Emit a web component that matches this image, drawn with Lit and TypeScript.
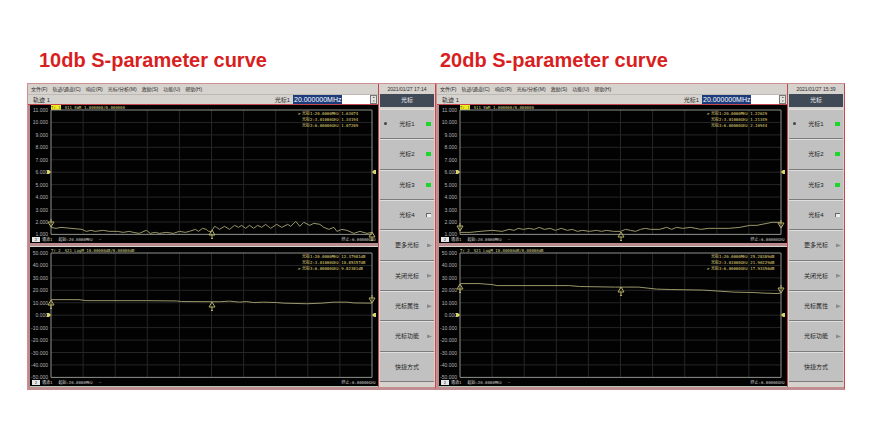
import { LitElement, html, svg, css } from "lit";
import { customElement, property } from "lit/decorators.js";
import { classMap } from "lit/directives/class-map.js";

interface Marker {
  n: number;
  x: number;
  y: number;
  down?: boolean;
}

interface Trace {
  title: string;
  rest: string;
  active: boolean;
  ticks: string[];
  readouts: string[];
  current: number;
  points: string;
  markers: Marker[];
}

interface Screen {
  heading: string;
  date: string;
  traces: Trace[];
}

const range = (from: number, step: number) =>
  Array.from({ length: 11 }, (_, i) => (from - i * step).toFixed(3));

const SWR_TICKS = range(11, 1);
const LOG_TICKS = range(50, 10);

const SCREENS: Screen[] = [
  {
    heading: "10db S-parameter curve",
    date: "2021/01/27 17:14",
    traces: [
      {
        title: "Tr 1",
        rest: "S11 SWR 1.000000/0.000000",
        active: true,
        ticks: SWR_TICKS,
        readouts: ["光标1:20.0000MHz 1.63074", "光标2:3.01000GHz 1.34194", "光标3:6.00000GHz 1.07209"],
        current: 0,
        points:
          "0,117 5,118 10,117 20,118 31,119 35,121 40,120 44,121 52,120 58,121 66,121 72,122 78,121 82,122 88,123 95,120 99,123 104,122 108,123 115,122 122,123 128,121 134,122 138,121 144,119 147,121 151,118 155,119 157,121 160,121 163,116 165,117 168,119 173,116 178,119 183,115 187,117 190,115 194,118 198,115 202,118 206,115 210,117 214,114 219,118 225,114 230,117 236,114 239,116 244,111 248,116 252,112 258,115 262,113 268,114 272,117 277,119 282,117 285,121 290,119 295,120 302,123 308,121 315,123 320,122",
        markers: [
          { n: 1, x: 0, y: 117, down: true },
          { n: 2, x: 160, y: 120 },
          { n: 3, x: 320, y: 122 },
        ],
      },
      {
        title: "Tr 2",
        rest: "S21 LogM 10.00000dB/0.00000dB",
        active: false,
        ticks: LOG_TICKS,
        readouts: ["光标1:20.0000MHz 12.37981dB", "光标2:3.01000GHz 10.85357dB", "光标3:6.00000GHz 9.82381dB"],
        current: 2,
        points:
          "0,46.5 28,46.5 35,47.5 95,47.5 125,47.8 130,48.4 168,48.6 178,48 188,49 195,48.4 202,49.4 212,49 225,49.4 232,50 255,50.6 270,50 282,49 295,49 302,49.8 320,50",
        markers: [
          { n: 1, x: 0, y: 47 },
          { n: 2, x: 160, y: 49 },
          { n: 3, x: 320, y: 50, down: true },
        ],
      },
    ],
  },
  {
    heading: "20db S-parameter curve",
    date: "2021/01/27 15:39",
    traces: [
      {
        title: "Tr 1",
        rest: "S11 SWR 1.000000/0.000000",
        active: true,
        ticks: SWR_TICKS,
        readouts: ["光标1:20.0000MHz 1.22629", "光标2:3.01000GHz 1.21349", "光标3:6.00000GHz 2.10944"],
        current: 0,
        points:
          "0,122 10,122 20,121 32,120 42,121 49,119 54,120 58,118 63,119 69,118 74,119 79,117 84,119 90,118 95,120 101,118 107,120 112,119 117,121 122,120 129,121 136,120 141,121 146,120 153,121 160,121 165,119 170,120 175,121 180,119 185,118 190,119 199,119 206,117 211,119 216,117 222,118 230,117 240,119 248,118 256,118 268,118 279,117 289,115 296,115 306,113 311,112 316,112 320,112",
        markers: [
          { n: 1, x: 0, y: 121, down: true },
          { n: 2, x: 160, y: 122 },
          { n: 3, x: 320, y: 118, down: true },
        ],
      },
      {
        title: "Tr 2",
        rest: "S21 LogM 10.00000dB/0.00000dB",
        active: false,
        ticks: LOG_TICKS,
        readouts: ["光标1:20.0000MHz 25.28389dB", "光标2:3.01000GHz 21.90229dB", "光标3:6.00000GHz 17.93350dB"],
        current: 2,
        points:
          "0,30.5 19,30.5 32,31.5 37,32.5 109,32.5 119,33.4 155,34 165,34 178,34 196,36 210,36.4 243,37 273,39 293,39.4 303,40 316,40.4 320,40",
        markers: [
          { n: 1, x: 0, y: 31 },
          { n: 2, x: 160, y: 34 },
          { n: 3, x: 320, y: 40, down: true },
        ],
      },
    ],
  },
];

const MENU = ["文件(F)", "轨迹/通道(C)", "响应(R)", "光标/分析(M)", "激励(S)", "功能(U)", "帮助(H)"];

const KEYS: { label: string; kind: "on" | "off" | "more" | "plain"; current?: boolean }[] = [
  { label: "光标1", kind: "on", current: true },
  { label: "光标2", kind: "on" },
  { label: "光标3", kind: "on" },
  { label: "光标4", kind: "off" },
  { label: "更多光标", kind: "more" },
  { label: "关闭光标", kind: "more" },
  { label: "光标属性", kind: "more" },
  { label: "光标功能", kind: "more" },
  { label: "快捷方式", kind: "plain" },
];

@customElement("trace-plot")
export class TracePlot extends LitElement {
  @property({ attribute: false }) trace!: Trace;

  static styles = css`
    :host {
      display: block;
      background: #020202;
      color: #d0d0d0;
      font: 4px/6px "DejaVu Sans Mono", "Noto Sans CJK SC", monospace;
      white-space: nowrap;
    }
    .title {
      display: flex;
      height: 5px;
      padding-left: 21px;
      gap: 4px;
      line-height: 5px;
      color: #dcd68a;
    }
    .active .tag {
      background: #f3ee1f;
      color: #6b6710;
    }
    .body {
      display: grid;
      grid-template-columns: 21px 1fr 6px;
      height: 124px;
    }
    .ticks {
      display: flex;
      flex-direction: column;
      justify-content: space-between;
      padding-right: 3px;
      text-align: right;
      font-family: "Liberation Sans", sans-serif;
      font-size: 5px;
      color: #b5b5b5;
    }
    .ticks span {
      height: 0;
      line-height: 0;
    }
    .chart {
      position: relative;
    }
    .grid {
      display: block;
      width: 100%;
      height: 100%;
      overflow: visible;
    }
    .grid * {
      fill: none;
      vector-effect: non-scaling-stroke;
    }
    .rule {
      stroke: #262626;
    }
    .frame {
      stroke: #8f928c;
    }
    .curve {
      stroke: #99966a;
    }
    .ref,
    .marker {
      position: absolute;
      overflow: visible;
      fill: none;
      stroke: #b5b060;
    }
    .ref {
      top: calc(50% - 2px);
      width: 4px;
      height: 4px;
      fill: #d8d56a;
      stroke: none;
    }
    .ref.left {
      left: -4px;
    }
    .ref.right {
      left: 100%;
    }
    .marker {
      width: 6px;
      height: 10px;
      margin-left: -3px;
    }
    .marker.down {
      margin-top: -7px;
    }
    .readouts {
      position: absolute;
      top: 1px;
      right: 0;
      width: 74px;
      margin: 0;
      padding: 0;
      list-style: none;
      color: #e0dc7c;
    }
    .readouts li {
      display: grid;
      grid-template-columns: 4px 1fr;
    }
    .foot {
      display: flex;
      align-items: center;
      box-sizing: border-box;
      height: 9px;
      padding: 2px 2px 0;
      gap: 6px;
    }
    .channel {
      display: flex;
      gap: 2px;
    }
    .box {
      width: 8px;
      height: 5px;
      line-height: 5px;
      background: #e6e6e6;
      color: #333;
      text-align: center;
    }
    .stop {
      margin-left: auto;
    }
  `;

  render() {
    const t = this.trace;
    const steps = [1, 2, 3, 4, 5, 6, 7, 8, 9];
    return html`
      <div class=${classMap({ title: true, active: t.active })}>
        <span class="tag">${t.title}</span><span>${t.rest}</span>
      </div>
      <div class="body">
        <div class="ticks">${t.ticks.map((v) => html`<span>${v}</span>`)}</div>
        <div class="chart">
          <svg class="grid" viewBox="0 0 320 124" preserveAspectRatio="none" aria-hidden="true">
            ${steps.map(
              (i) => svg`<path class="rule" d="M${i * 32} 0V124M0 ${i * 12.4}H320" />`
            )}
            <rect class="frame" width="320" height="124" />
            <polyline class="curve" points=${t.points} />
          </svg>
          <svg class="ref left" viewBox="0 0 4 4"><path d="M0 0H2L4 2L2 4H0Z" /></svg>
          <svg class="ref right" viewBox="0 0 4 4"><path d="M4 0V4H2L0 2L2 0Z" /></svg>
          ${t.markers.map(
            (m) => html`<svg
              class=${classMap({ marker: true, down: !!m.down })}
              style="left:${(m.x / 320) * 100}%;top:${(m.y / 124) * 100}%"
              viewBox="0 0 6 10"
            >
              ${m.down
                ? svg`<path d="M0 2H6L3 7ZM3 -1V2" />`
                : svg`<path d="M3 0L6 5H0ZM3 5V8M2 8.500H4" />`}
            </svg>`
          )}
          <ul class="readouts">
            ${t.readouts.map(
              (r, i) => html`<li><span>${i === t.current ? ">" : ""}</span><span>${r}</span></li>`
            )}
          </ul>
        </div>
      </div>
      <div class="foot">
        <span class="channel"><span class="box">2</span>通道1</span>
        <span>起始:20.0000MHz</span>
        <span>—</span>
        <span class="stop">终止:6.00000GHz</span>
      </div>
    `;
  }
}

@customElement("analyzer-screen")
export class AnalyzerScreen extends LitElement {
  @property({ attribute: false }) screenData!: Screen;

  static styles = css`
    :host {
      display: grid;
      grid-template-columns: 1fr 55px;
      box-sizing: border-box;
      border: 1px solid #cf9092;
      border-right-color: #c4474c;
      border-bottom: 3px solid #c08e90;
      padding-right: 1px;
      background: #d6d2cd;
      color: #2c2c2c;
      font: 5px/10px "Liberation Sans", "Noto Sans CJK SC", sans-serif;
      white-space: nowrap;
    }
    button {
      font: inherit;
      color: inherit;
      border: 0;
      padding: 0;
      background: none;
    }
    .work {
      display: flex;
      flex-direction: column;
      min-width: 0;
      border-right: 1px solid #c4474c;
    }
    .menu {
      display: flex;
      gap: 5px;
      height: 10px;
      padding-left: 3px;
    }
    .entry {
      display: flex;
      align-items: center;
      box-sizing: border-box;
      height: 11px;
      padding: 0 1px 0 5px;
      border-top: 1px solid #bdb9b5;
      border-bottom: 1px solid #c4474c;
      font-size: 6px;
    }
    .entry label {
      margin-left: auto;
      padding-right: 3px;
    }
    .entry input {
      box-sizing: border-box;
      width: 77px;
      height: 9px;
      border: 0;
      padding: 0 1px;
      font: 7px/9px "Liberation Sans", sans-serif;
      color: #fff;
      background: linear-gradient(90deg, #1d3c7c 49px, #fff 49px);
    }
    .spin {
      display: grid;
      width: 7px;
      height: 9px;
      border: 1px solid #777;
      box-sizing: border-box;
      background: #e4e2df;
    }
    .spin button {
      font-size: 3px;
      line-height: 3px;
    }
    .plots {
      display: flex;
      flex-direction: column;
      padding-left: 2px;
      background: #b98b8d;
    }
    .plots trace-plot + trace-plot {
      margin-top: 3px;
      border-top: 1px solid #d9d3cf;
      padding-top: 1px;
      border-bottom: 1px solid #b5c4b9;
    }
    .keys {
      display: flex;
      flex-direction: column;
      padding-left: 1px;
      padding-bottom: 5px;
    }
    .date {
      height: 10px;
      text-align: center;
    }
    .caption {
      height: 13px;
      margin-bottom: 2px;
      background: #404a56;
      color: #eee;
      font-size: 6px;
      line-height: 13px;
      text-align: center;
    }
    .key {
      position: relative;
      flex: 1;
      border-top: 1px solid #dedede;
      border-bottom: 1px solid #7c7c7c;
      background: #c1c1c1;
      color: #1c1c1c;
      font-size: 6px;
      line-height: 8px;
    }
    .key::after {
      position: absolute;
      top: calc(50% - 2px);
      right: 3px;
      box-sizing: border-box;
      width: 5px;
      height: 4px;
    }
    .on::after {
      content: "";
      background: #1fd52a;
    }
    .off::after {
      content: "";
      background: #eee;
      border-top: 1px solid #666;
      border-left: 1px solid #666;
    }
    .more::after {
      content: "";
      right: 2px;
      background: #8a8a8a;
      clip-path: polygon(0 0, 100% 50%, 0 100%);
    }
    .dot {
      position: absolute;
      top: calc(50% - 2px);
      left: 4px;
      width: 3px;
      height: 3px;
      border-radius: 50%;
      background: #444;
    }
  `;

  render() {
    const s = this.screenData;
    return html`
      <section class="work">
        <nav class="menu">${MENU.map((m) => html`<button>${m}</button>`)}</nav>
        <div class="entry">
          <span>轨迹 1</span>
          <label for="freq">光标1</label>
          <input id="freq" .value=${"20.000000MHz"} />
          <span class="spin">
            <button aria-label="增加">▴</button>
            <button aria-label="减少">▾</button>
          </span>
        </div>
        <div class="plots">
          ${s.traces.map((t) => html`<trace-plot .trace=${t}></trace-plot>`)}
        </div>
      </section>
      <aside class="keys">
        <time class="date">${s.date}</time>
        <div class="caption">光标</div>
        ${KEYS.map(
          (k) => html`<button class="key ${k.kind}">
            ${k.current ? html`<span class="dot"></span>` : ""}${k.label}
          </button>`
        )}
      </aside>
    `;
  }
}

@customElement("app-root")
export class AppRoot extends LitElement {
  static styles = css`
    :host {
      display: block;
      padding: 47px 25px 37px 27px;
      background: #fff;
    }
    .pair {
      display: grid;
      grid-template-columns: 1fr 1fr;
    }
    h2 {
      margin: 0 0 10px;
      padding-left: 12px;
      font: bold 20px/26px "Liberation Sans", Arial, sans-serif;
      color: #d81e1e;
      white-space: nowrap;
    }
    .pair div + div h2 {
      padding-left: 4px;
    }
  `;

  render() {
    return html`
      <main class="pair">
        ${SCREENS.map(
          (s) => html`<div>
            <h2>${s.heading}</h2>
            <analyzer-screen .screenData=${s}></analyzer-screen>
          </div>`
        )}
      </main>
    `;
  }
}
